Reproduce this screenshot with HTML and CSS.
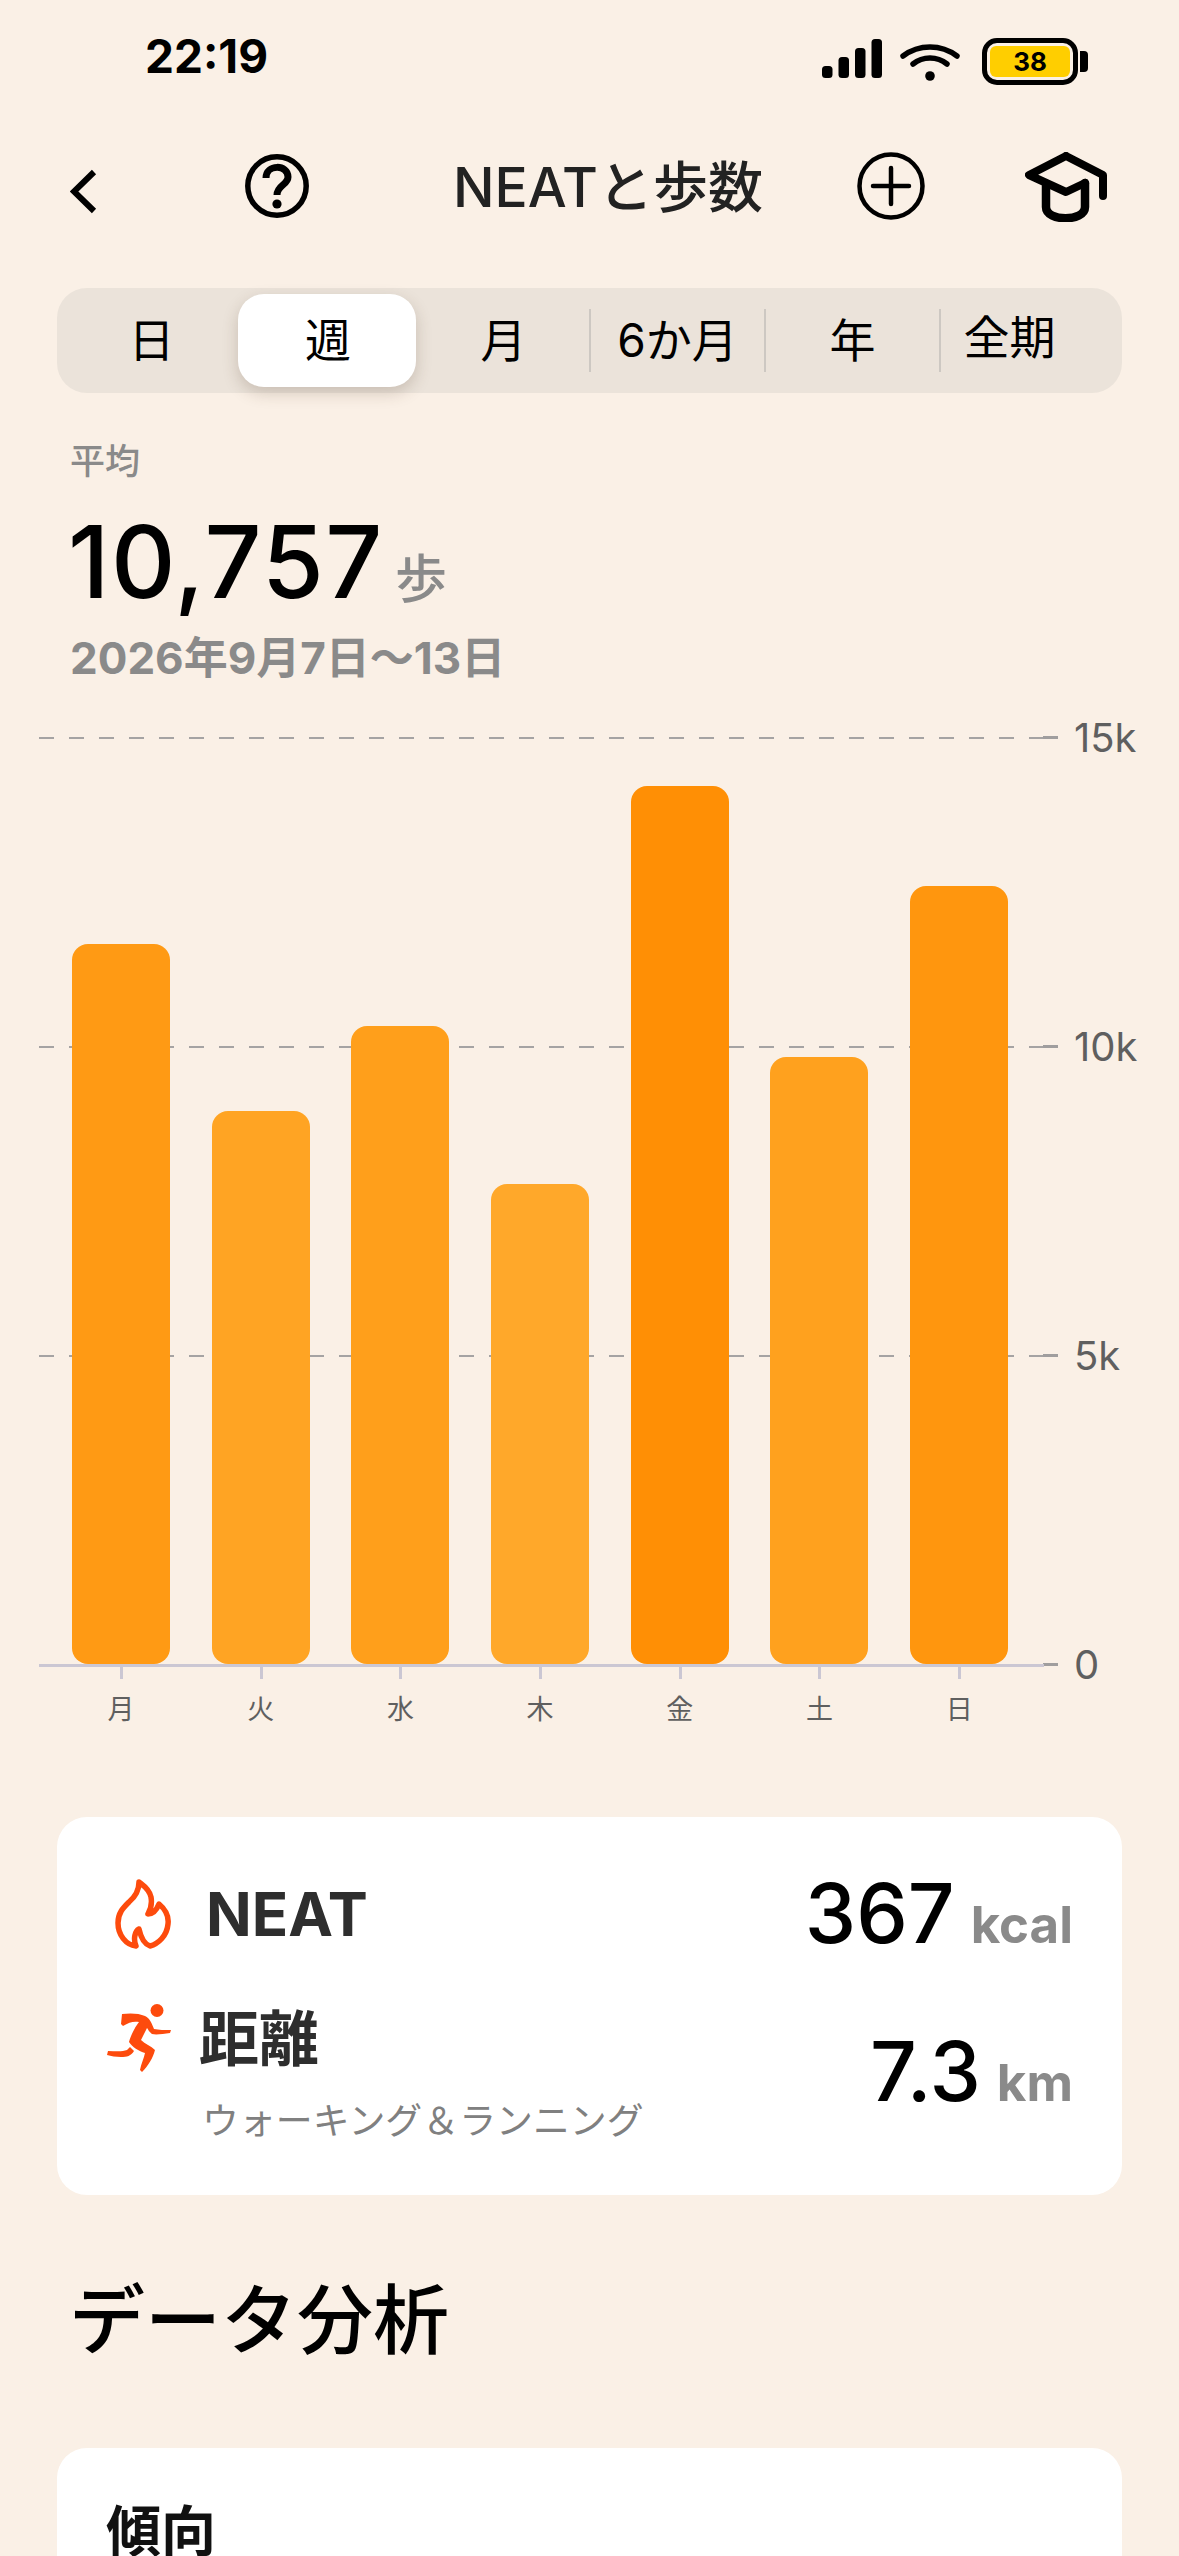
FILE: index.html
```html
<!DOCTYPE html>
<html lang="ja">
<head>
<meta charset="utf-8">
<title>NEATと歩数</title>
<link rel="stylesheet" href="styles.css">
</head>
<body>
<div class="phone">

<div class="status">
  <span class="clock">22:19</span>
  <div class="status-icons">
    <svg class="signal" width="60" height="39" viewBox="0 0 60 39"><rect x="0" y="27" width="10.5" height="12" rx="3.5"/><rect x="16.5" y="18" width="10.5" height="21" rx="3.5"/><rect x="33" y="9" width="10.5" height="30" rx="3.5"/><rect x="49.5" y="0" width="10.5" height="39" rx="3.5"/></svg>
    <svg class="wifi" width="60" height="38" viewBox="0 0 60 38"><path d="M3 13 C19 1 41 1 57 13" fill="none" stroke="#000" stroke-width="5.5" stroke-linecap="round"/><path d="M13 21 C23 13 37 13 47 21" fill="none" stroke="#000" stroke-width="5.5" stroke-linecap="round"/><circle cx="30" cy="33" r="4.8"/></svg>
    <div class="battery"><div class="battery-fill">38</div></div>
    <div class="battery-cap"></div>
  </div>
</div>

<div class="nav">
  <svg class="ico-back" width="27" height="45" viewBox="0 0 27 45"><path d="M24 3 L4 22.5 L24 42" fill="none" stroke="#000" stroke-width="6"/></svg>
  <svg class="ico-help" width="64" height="64" viewBox="0 0 64 64"><circle cx="32" cy="32" r="29.2" fill="none" stroke="#000" stroke-width="5.5"/><path d="M21 24 C21 10 43 10 43 23 C43 31 32 31 32 41" fill="none" stroke="#000" stroke-width="7"/><circle cx="32" cy="50" r="4.6"/></svg>
  <h1 class="title">NEATと歩数</h1>
  <svg class="ico-plus" width="68" height="68" viewBox="0 0 68 68"><circle cx="34" cy="34" r="31.5" fill="none" stroke="#000" stroke-width="4.5"/><path d="M34 16 V52 M16 34 H52" fill="none" stroke="#000" stroke-width="4.5" stroke-linecap="round"/></svg>
  <svg class="ico-cap" width="82" height="70" viewBox="0 0 82 70"><path d="M41 4 L4 23 L41 40 L60 31 M41 4 L78 23 V44" fill="none" stroke="#000" stroke-width="8" stroke-linecap="round" stroke-linejoin="round"/><path d="M21 34 V55 C21 70 60 70 60 55 V31" fill="none" stroke="#000" stroke-width="8.5" stroke-linecap="round" stroke-linejoin="round"/></svg>
</div>

<div class="segments">
  <div class="seg">日</div>
  <div class="seg seg-on">週</div>
  <div class="seg seg-month">月</div>
  <div class="seg seg-line">6か月</div>
  <div class="seg seg-line">年</div>
  <div class="seg seg-line seg-last">全期</div>
</div>

<div class="summary">
  <div class="avg-label">平均</div>
  <div class="avg-value">10,757<span class="avg-unit">歩</span></div>
  <div class="avg-date">2026年9月7日～13日</div>
</div>

<div class="chart">
  <div class="grid-line grid-15"></div>
  <div class="grid-line grid-10"></div>
  <div class="grid-line grid-5"></div>
  <div class="tick tick-15"></div>
  <div class="tick tick-10"></div>
  <div class="tick tick-5"></div>
  <div class="tick tick-0"></div>
  <span class="y-label y-15">15k</span>
  <span class="y-label y-10">10k</span>
  <span class="y-label y-5">5k</span>
  <span class="y-label y-0">0</span>
  <div class="bars">
    <div class="bar-col"><div class="bar" style="height:720px;background:#ff9a14"></div></div>
    <div class="bar-col"><div class="bar" style="height:553px;background:#ffa423"></div></div>
    <div class="bar-col"><div class="bar" style="height:638px;background:#ff9f1b"></div></div>
    <div class="bar-col"><div class="bar" style="height:480px;background:#ffa82a"></div></div>
    <div class="bar-col"><div class="bar" style="height:878px;background:#ff8f05"></div></div>
    <div class="bar-col"><div class="bar" style="height:607px;background:#ffa11e"></div></div>
    <div class="bar-col"><div class="bar" style="height:778px;background:#ff960e"></div></div>
  </div>
  <div class="axis"></div>
  <div class="days">
    <div class="day">月</div>
    <div class="day">火</div>
    <div class="day">水</div>
    <div class="day">木</div>
    <div class="day">金</div>
    <div class="day">土</div>
    <div class="day">日</div>
  </div>
</div>

<div class="card stats">
  <div class="stat stat-neat">
    <svg class="ico-flame" width="56" height="70" viewBox="0 0 56 70"><path d="M24 3 C26 5 34 9 36 18 C37 24 36 30 33 35 C38 35 42 30 44 25 C50 30 54 37 53 45 C52 57 43 65 35 67 C29 65 26 59 24 50 C20 52 18 60 21 67 C11 66 3 56 3 44 C3 34 8 29 14 23 C20 18 24 11 24 3 Z" fill="none" stroke="#fd4b0d" stroke-width="5.5" stroke-linejoin="round"/></svg>
    <span class="stat-name">NEAT</span>
    <span class="stat-value">367<span class="stat-unit">kcal</span></span>
  </div>
  <div class="stat stat-dist">
    <svg class="ico-run" width="64" height="68" viewBox="0 0 64 68"><circle cx="50" cy="6.5" r="6.5" fill="#fd4b0d"/><path d="M15 10 C22 9 32 9 38 12 C43 14 45 20 47 25 C52 26 57 26 64 26 L63 29 C56 30 49 31 45 30 C42 28 41 25 40 24 L34 36 C38 40 44 42 48 46 C46 54 41 62 35 68 L33 66 C34 60 37 54 38 49 C32 47 25 43 22 38 C24 30 29 22 32 18 C27 17 22 18 16 22 L14 20 Z M23 43 L27 47 C24 52 20 53 14 53 C9 53 4 52 0 51 L1 47 C8 47 15 48 20 46 Z" fill="#fd4b0d"/></svg>
    <div class="dist-text">
      <div class="stat-name-jp">距離</div>
      <div class="stat-sub">ウォーキング＆ランニング</div>
    </div>
    <span class="stat-value">7.3<span class="stat-unit">km</span></span>
  </div>
</div>

<h2 class="section">データ分析</h2>

<div class="card trend">
  <div class="trend-title">傾向</div>
</div>

</div>
</body>
</html>
```

FILE: styles.css
```css
* {
	box-sizing: border-box;
}
html, body {
	margin: 0;
	padding: 0;
}
body {
	background: #faf0e6;
	font-family: Inter, "Noto Sans CJK JP", sans-serif;
	color: #000;
}
.phone {
	width: 1179px;
	height: 2556px;
	overflow: hidden;
}

/* status bar */
.status {
	height: 92px;
	padding: 33px 91px 0 145px;
	display: flex;
	justify-content: space-between;
}
.clock {
	font-size: 46px;
	font-weight: 700;
	line-height: 46px;
}
.status-icons {
	display: flex;
	align-items: flex-start;
	padding-top: 5px;
}
.signal {
	margin-right: 18px;
	margin-top: 1px;
}
.wifi {
	margin-right: 22px;
	margin-top: 5px;
}
.battery {
	width: 96px;
	height: 47px;
	border: 5px solid #000;
	border-radius: 15px;
	padding: 3px;
}
.battery-fill {
	height: 31px;
	background: #ffce00;
	border-radius: 6px;
	font-size: 26px;
	font-weight: 700;
	line-height: 31px;
	text-align: center;
}
.battery-cap {
	width: 8px;
	height: 21px;
	background: #000;
	border-radius: 0 4px 4px 0;
	margin: 13px 0 0 2px;
}

/* nav */
.nav {
	height: 196px;
	display: flex;
	align-items: flex-start;
	padding-top: 60px;
}
.ico-back {
	margin: 17px 0 0 70px;
}
.ico-help {
	margin: 2px 0 0 148px;
}
.title {
	margin: 0 0 0 144px;
	width: 308px;
	font-size: 55px;
	font-weight: 500;
	line-height: 70px;
	color: #222;
	white-space: nowrap;
}
.ico-plus {
	margin-left: 96px;
}
.ico-cap {
	margin-left: 100px;
}

/* period segments */
.segments {
	margin: 0 57px;
	height: 105px;
	background: #ebe3da;
	border-radius: 30px;
	padding: 6px 0 6px 6px;
	display: flex;
}
.seg {
	width: 175px;
	font-size: 46px;
	line-height: 93px;
	text-align: center;
	text-indent: 2px;
	position: relative;
}
.seg-on {
	width: 178px;
	background: #fff;
	border-radius: 26px;
	box-shadow: 0 6px 16px rgba(80, 60, 40, .22);
}
.seg-month {
	width: 173px;
}
.seg-line::before {
	content: "";
	position: absolute;
	left: 0;
	top: 15px;
	width: 2px;
	height: 63px;
	background: #cdc8c2;
}
.seg-last {
	text-indent: -34px;
	line-height: 87px;
}

/* average */
.summary {
	padding: 0 70px;
}
.avg-label {
	margin-top: 46px;
	font-size: 35px;
	font-weight: 500;
	line-height: 44px;
	color: #8a8a8a;
}
.avg-value {
	font-size: 100px;
	font-weight: 500;
	letter-spacing: 1.5px;
	line-height: 110px;
	margin: 24px 0 0 -2px;
}
.avg-unit {
	font-family: "Noto Sans CJK JP", sans-serif;
	font-size: 52px;
	font-weight: 500;
	color: #8a8a8a;
	margin-left: 11px;
}
.avg-date {
	font-size: 44px;
	font-weight: 700;
	line-height: 50px;
	color: #8a8a8a;
	margin-top: 2px;
	white-space: nowrap;
}

/* chart: the lines and bars sit on a measured canvas */
.chart {
	position: relative;
	height: 1136px;
	margin-top: -2px;
}
.grid-line {
	position: absolute;
	left: 39px;
	width: 1005px;
	height: 2px;
	background: repeating-linear-gradient(to right, #a5a3a3 0 15px, transparent 15px 30px);
}
.grid-15 { top: 56px; }
.grid-10 { top: 365px; }
.grid-5 { top: 674px; }
.tick {
	position: absolute;
	left: 1043px;
	width: 15px;
	height: 3px;
	background: #a09e9e;
}
.tick-15 { top: 55px; }
.tick-10 { top: 364px; }
.tick-5 { top: 673px; }
.tick-0 { top: 982px; }
.y-label {
	position: absolute;
	left: 1074px;
	font-size: 40px;
	line-height: 40px;
	color: #5f5f5f;
}
.y-15 { top: 37px; }
.y-10 { top: 346px; }
.y-5 { top: 655px; }
.y-0 { top: 964px; }
.bars {
	position: absolute;
	left: 72px;
	top: 1px;
	height: 982px;
	display: flex;
	align-items: flex-end;
	gap: 41.7px;
}
.bar {
	width: 98px;
	border-radius: 16px;
}
.axis {
	position: absolute;
	left: 39px;
	top: 983px;
	width: 1005px;
	height: 3px;
	background: #cbc7d3;
}
.days {
	position: absolute;
	left: 72px;
	top: 986px;
	display: flex;
	gap: 41.7px;
}
.day {
	width: 98px;
	padding-top: 25px;
	font-size: 27px;
	line-height: 36px;
	text-align: center;
	color: #5f5f5f;
	position: relative;
}
.day::before {
	content: "";
	position: absolute;
	left: 48px;
	top: 0;
	width: 3px;
	height: 12px;
	background: #cbc7d3;
}

/* cards */
.card {
	background: #fff;
	border-radius: 30px;
	margin: 0 57px;
}
.stats {
	height: 378px;
	padding: 62px 49px 0 49px;
}
.stat {
	display: flex;
	align-items: flex-start;
	position: relative;
}
.stat-neat {
	height: 125px;
}
.ico-flame {
	margin: 0 0 0 9px;
}
.stat-name {
	margin-left: 35px;
	font-size: 60px;
	font-weight: 700;
	line-height: 70px;
	color: #2e2e2e;
}
.stat-value {
	margin-left: auto;
	font-size: 82px;
	font-weight: 500;
	line-height: 70px;
	white-space: nowrap;
}
.stat-unit {
	font-size: 51px;
	font-weight: 700;
	color: #8a8a8a;
	margin-left: 16px;
}
.ico-run {
	margin: 0 0 0 1px;
}
.dist-text {
	margin-left: 28px;
}
.stat-name-jp {
	font-size: 60px;
	font-weight: 700;
	line-height: 70px;
	color: #2e2e2e;
}
.stat-sub {
	margin: 22px 0 0 3px;
	font-size: 36.9px;
	line-height: 50px;
	color: #808080;
	white-space: nowrap;
}
.stat-dist .stat-value {
	margin-top: 33px;
}

.section {
	margin: 75px 0 0 69px;
	font-size: 76px;
	font-weight: 500;
	line-height: 100px;
}
.trend {
	margin-top: 78px;
	height: 200px;
	padding: 48px 49px 0;
}
.trend-title {
	font-size: 55px;
	font-weight: 700;
	line-height: 70px;
	color: #111;
}
```
